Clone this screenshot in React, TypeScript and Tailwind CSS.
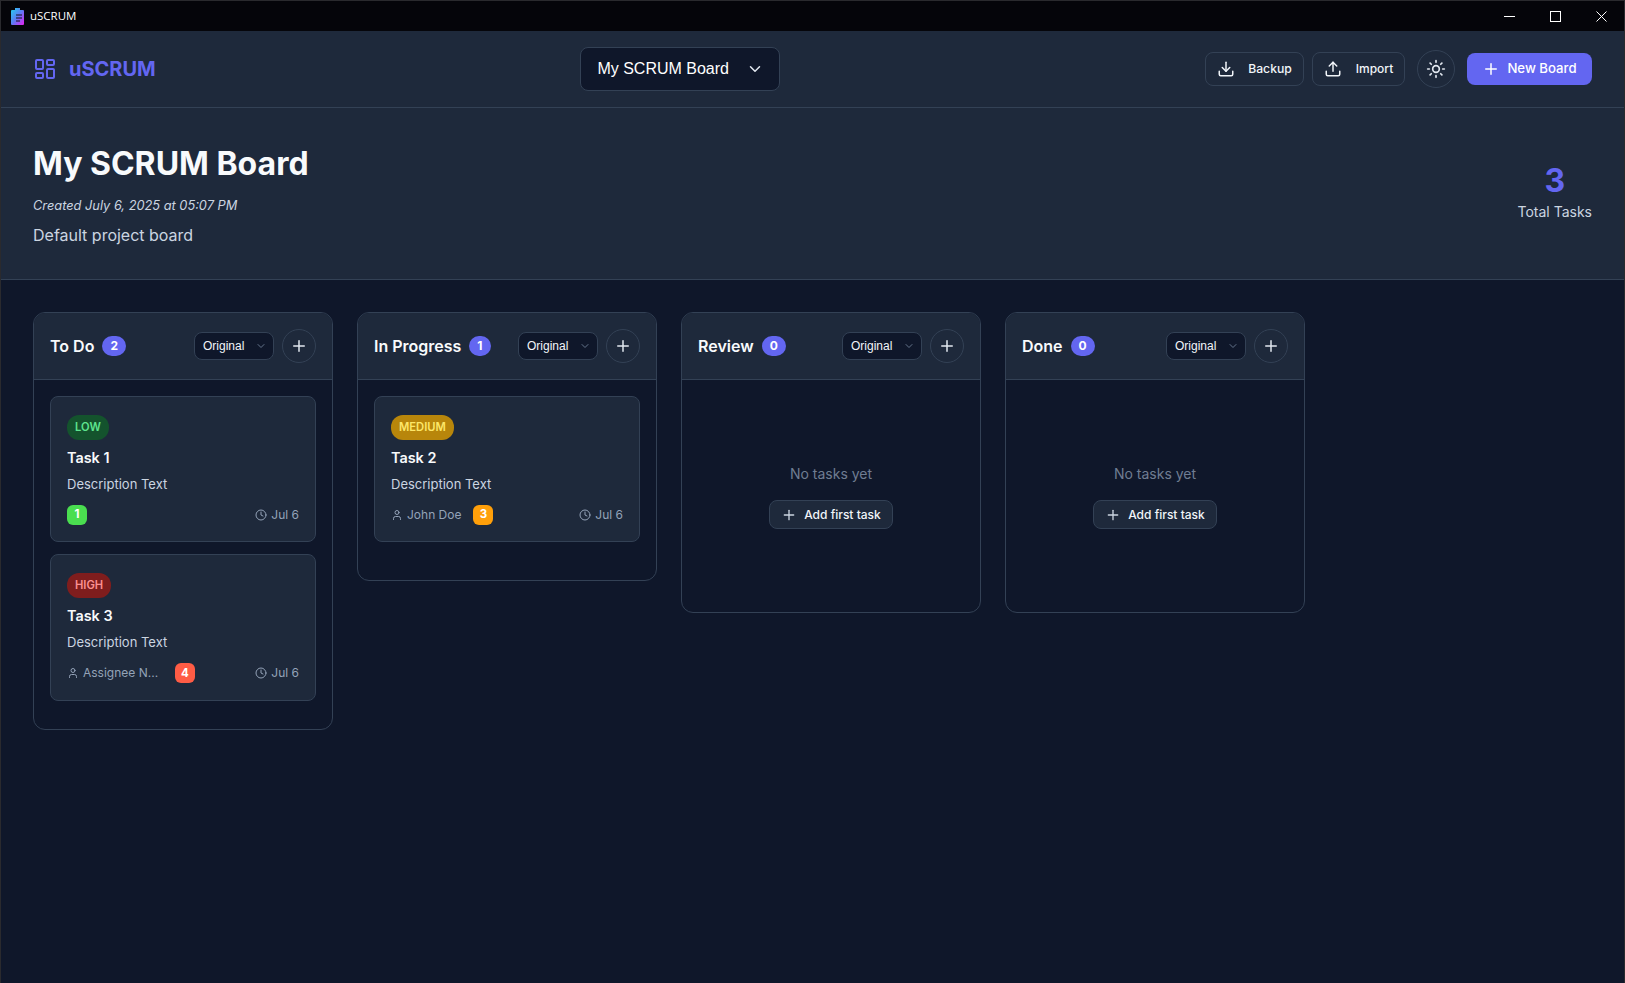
import { ChevronDown, Clock, Download, LayoutDashboard, Plus, Sun, Upload, User } from "lucide-react";

type Task = {
  priority: string;
  chip: string;
  title: string;
  assignee?: string;
  assigneeW?: string;
  points: number;
  pointsBg: string;
};

type Col = { name: string; tasks: Task[] };

const columns: Col[] = [
  {
    name: "To Do",
    tasks: [
      { priority: "LOW", chip: "bg-[#14532d] text-[#5ee58f]", title: "Task 1", points: 1, pointsBg: "bg-[#4ade50]" },
      { priority: "HIGH", chip: "bg-[#7f1d1d] text-[#fc9090]", title: "Task 3", assignee: "Assignee N...", assigneeW: "w-[80px]", points: 4, pointsBg: "bg-[#ff5c45]" },
    ],
  },
  {
    name: "In Progress",
    tasks: [
      { priority: "MEDIUM", chip: "bg-[#b8860b] text-[#fde668]", title: "Task 2", assignee: "John Doe", points: 3, pointsBg: "bg-[#ff9f0a]" },
    ],
  },
  { name: "Review", tasks: [] },
  { name: "Done", tasks: [] },
];

function TitleBar() {
  return (
    <div className="flex h-[31px] items-center justify-between border-t border-[#2a2a2e] bg-[#05050a]">
      <div className="flex items-center gap-[6px] pl-[10px]">
        <svg width="13" height="17" viewBox="0 0 13 17">
          <defs>
            <linearGradient id="appicon" x1="0" y1="0" x2="1" y2="1">
              <stop offset="0" stopColor="#22d3ee" />
              <stop offset="0.5" stopColor="#5b7cf5" />
              <stop offset="1" stopColor="#e81ff0" />
            </linearGradient>
          </defs>
          <path d="M4 0h5v2h3a1 1 0 0 1 1 1v13a1 1 0 0 1-1 1H1a1 1 0 0 1-1-1V3a1 1 0 0 1 1-1h3z" fill="url(#appicon)" />
          <path d="M5 7h6M5 10h6M5 13h4" stroke="#101020" strokeWidth="1" />
        </svg>
        <span className="font-['Open_Sans',sans-serif] text-[11.5px] text-white">uSCRUM</span>
      </div>
      <div className="flex items-center text-white">
        <div className="flex h-[31px] w-[46px] items-center justify-center">
          <svg width="11" height="11" viewBox="0 0 11 11"><path d="M0 5.5h11" stroke="currentColor" /></svg>
        </div>
        <div className="flex h-[31px] w-[46px] items-center justify-center">
          <svg width="11" height="11" viewBox="0 0 11 11"><rect x="0.5" y="0.5" width="10" height="10" fill="none" stroke="currentColor" /></svg>
        </div>
        <div className="flex h-[31px] w-[46px] items-center justify-center">
          <svg width="11" height="11" viewBox="0 0 11 11"><path d="M0.5 0.5l10 10M10.5 0.5l-10 10" stroke="currentColor" /></svg>
        </div>
      </div>
    </div>
  );
}

function Header() {
  return (
    <header className="flex h-[77px] items-center justify-between border-b border-[#334155] bg-[#1e293b] px-[32px]">
      <div className="flex items-center gap-[12px] text-[#6366f1]">
        <LayoutDashboard size={24} strokeWidth={2} />
        <span className="text-[20px] font-bold">uSCRUM</span>
      </div>
      <div className="flex h-[44px] w-[200px] items-center justify-between rounded-lg border border-[#334155] bg-[#0f172a] pl-[16px] pr-[15px] font-['Liberation_Sans',sans-serif] text-[16px] text-white">
        <span>My SCRUM Board</span>
        <ChevronDown size={18} strokeWidth={2} className="text-[#e2e8f0]" />
      </div>
      <div className="flex items-center">
        <button className="flex h-[34px] w-[99px] items-center justify-center gap-[13px] rounded-lg border border-[#334155] text-[12.2px] font-medium text-[#f1f5f9]">
          <Download size={18} />
          Backup
        </button>
        <button className="ml-2 flex h-[34px] w-[93px] items-center justify-center gap-[14px] rounded-lg border border-[#334155] text-[12px] font-medium text-[#f1f5f9]">
          <Upload size={18} />
          Import
        </button>
        <button className="ml-3 flex h-[38px] w-[38px] items-center justify-center rounded-full border border-[#334155] text-[#e2e8f0]">
          <Sun size={20} />
        </button>
        <button className="ml-3 flex h-[32px] w-[125px] items-center justify-center gap-[7px] rounded-lg bg-[#6366f1] text-[13.2px] font-medium text-white">
          <Plus size={18} />
          New Board
        </button>
      </div>
    </header>
  );
}

function Hero() {
  return (
    <section className="flex h-[172px] items-center justify-between border-b border-[#334155] bg-[#1e293b] px-[32px]">
      <div>
        <h1 className="text-[32px] leading-[48px] font-bold text-[#f8fafc]">My SCRUM Board</h1>
        <p className="mt-[8px] text-[12.8px] leading-[20px] text-[#cbd5e1] italic">Created July 6, 2025 at 05:07 PM</p>
        <p className="mt-[7px] text-[16px] leading-[24px] text-[#cbd5e1]">Default project board</p>
      </div>
      <div className="mb-[5px] flex flex-col items-center">
        <span className="text-[32px] leading-[41px] font-bold text-[#6366f1]">3</span>
        <span className="text-[14px] leading-[21px] text-[#cbd5e1]">Total Tasks</span>
      </div>
    </section>
  );
}

function TaskCard({ task }: { task: Task }) {
  return (
    <div className="mb-[12px] h-[146.4px] rounded-lg border border-[#334155] bg-[#1e293b] px-[16px] pt-[16px]">
      <span className={`inline-flex h-[25px] items-center rounded-xl px-[8px] text-[11.2px] font-semibold ${task.chip}`}>
        {task.priority}
      </span>
      <h3 className="mt-[7px] text-[14.4px] leading-[22px] font-semibold text-[#f8fafc]">{task.title}</h3>
      <p className="mt-[5px] text-[13px] leading-[20px] text-[#cbd5e1]">Description Text</p>
      <div className="mt-[11px] flex h-[20px] items-center justify-between text-[12px] text-[#94a3b8]">
        <div className="flex items-center">
          {task.assignee && (
            <span className="mr-[12px] flex items-center gap-[4px]">
              <User size={12} className="text-[#94a3b8]" />
              <span className={`whitespace-nowrap ${task.assigneeW ?? ""}`}>{task.assignee}</span>
            </span>
          )}
          <span className={`flex h-[20px] w-[20px] items-center justify-center rounded-md text-[11.5px] font-bold text-white ${task.pointsBg}`}>
            {task.points}
          </span>
        </div>
        <span className="flex items-center gap-[4px]">
          <Clock size={12} className="text-[#94a3b8]" />
          Jul 6
        </span>
      </div>
    </div>
  );
}

function Column({ col }: { col: Col }) {
  return (
    <div className="w-[300px] overflow-hidden rounded-xl border border-[#334155] bg-[#0f172a]">
      <div className="flex h-[67px] items-center justify-between border-b border-[#334155] bg-[#1e293b] px-[16px]">
        <div className="flex items-center gap-[8px]">
          <span className="text-[16px] font-semibold text-[#f8fafc]">{col.name}</span>
          <span className="flex h-[20px] min-w-[20px] items-center justify-center rounded-[10px] bg-[#6366f1] px-[8px] text-[12px] font-bold text-white">
            {col.tasks.length}
          </span>
        </div>
        <div className="flex items-center gap-[8px]">
          <div className="flex h-[28px] w-[80px] items-center justify-between rounded-lg border border-[#334155] bg-[#0f172a] pl-[8px] pr-[6px] font-['Liberation_Sans',sans-serif] text-[12px] text-[#f1f5f9]">
            Original
            <ChevronDown size={12} className="text-[#64748b]" />
          </div>
          <button className="flex h-[34px] w-[34px] items-center justify-center rounded-full border border-[#334155] text-[#e2e8f0]">
            <Plus size={18} />
          </button>
        </div>
      </div>
      {col.tasks.length > 0 ? (
        <div className="min-h-[200px] p-[16px]">
          {col.tasks.map((t) => (
            <TaskCard key={t.title} task={t} />
          ))}
        </div>
      ) : (
        <div className="flex h-[232px] flex-col items-center justify-center">
          <p className="text-[14px] leading-[21px] text-[#6f7d92]">No tasks yet</p>
          <button className="mt-[16px] flex h-[29px] w-[124px] items-center justify-center gap-[7px] rounded-lg border border-[#334155] bg-[#1e293b] text-[12px] font-medium text-[#f1f5f9]">
            <Plus size={16} className="text-[#cbd5e1]" />
            Add first task
          </button>
        </div>
      )}
    </div>
  );
}

export default function App() {
  return (
    <div className="flex h-[983px] flex-col overflow-hidden border-x border-[#2a2a2e] bg-[#0f172a] font-['Inter',sans-serif]">
      <TitleBar />
      <Header />
      <Hero />
      <main className="flex flex-1 items-start gap-[24px] p-[32px]">
        {columns.map((c) => (
          <Column key={c.name} col={c} />
        ))}
      </main>
    </div>
  );
}
